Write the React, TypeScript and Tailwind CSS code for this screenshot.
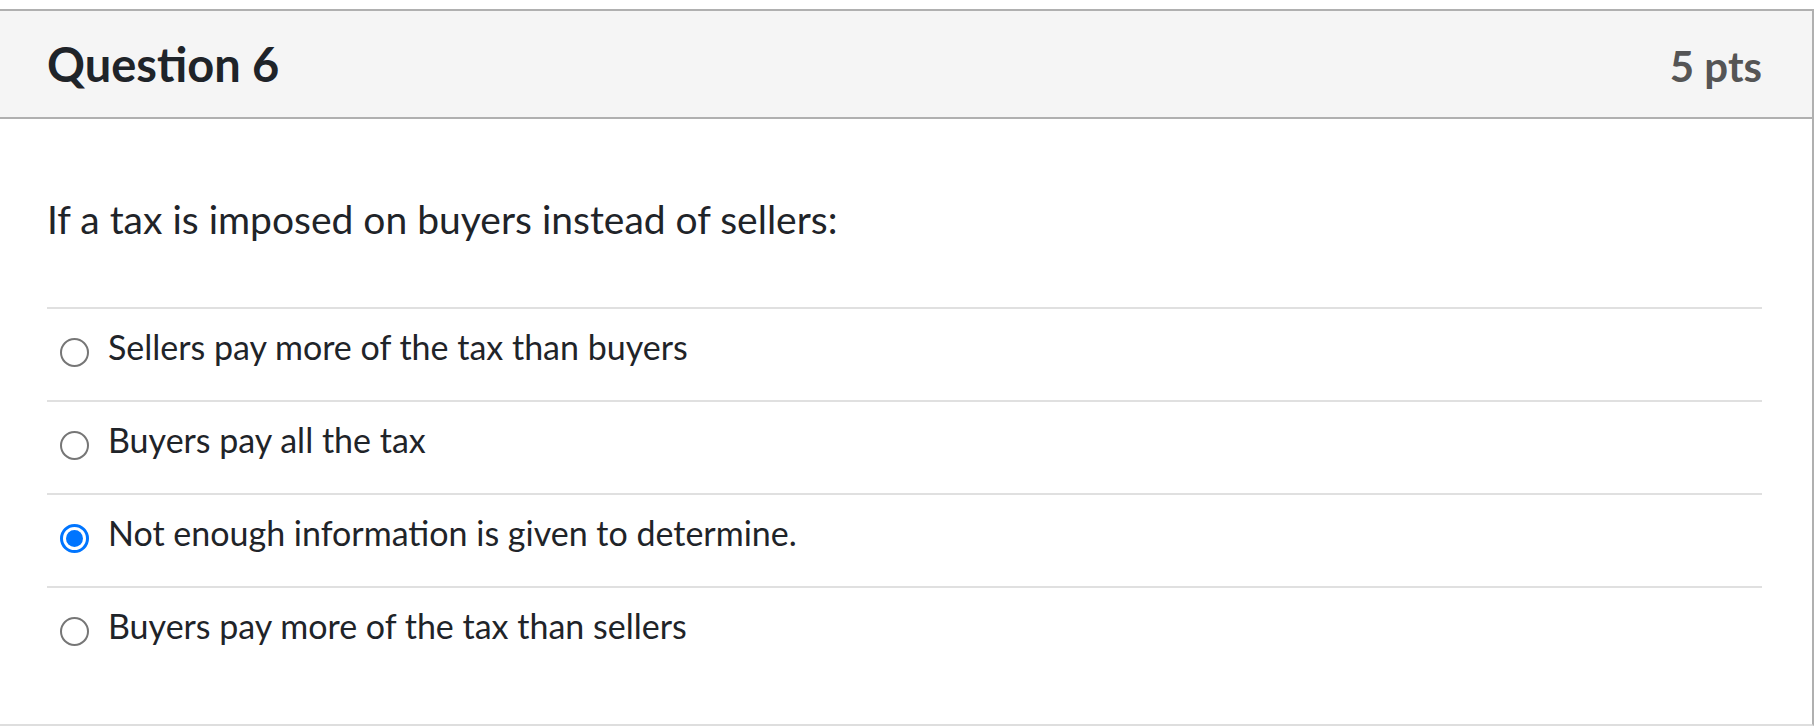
import React from "react";

const options = [
  { label: "Sellers pay more of the tax than buyers", checked: false },
  { label: "Buyers pay all the tax", checked: false },
  { label: "Not enough information is given to determine.", checked: true },
  { label: "Buyers pay more of the tax than sellers", checked: false },
];

function Radio({ checked }: { checked: boolean }) {
  if (checked) {
    return (
      <div className="w-[29px] h-[29px] rounded-full border-[3px] border-[#0075ff] bg-white flex items-center justify-center shrink-0">
        <div className="w-[17px] h-[17px] rounded-full bg-[#0075ff]" />
      </div>
    );
  }
  return <div className="w-[29px] h-[29px] rounded-full border-2 border-[#767676] bg-white shrink-0" />;
}

export default function App() {
  return (
    <div className="w-[1816px] h-[726px] bg-white pt-[9px] overflow-hidden" style={{ fontFamily: "Lato, 'Noto Sans', sans-serif" }}>
      <div className="w-[1814px] h-[717px] border-t-2 border-r-2 border-[#b0b0b0] border-b-2 border-b-[#dedede] flex flex-col">
        <div className="h-[108px] shrink-0 bg-[#f5f5f5] border-b-2 border-[#b0b0b0] flex items-center pl-[47px] pr-[50px]">
          <div className="flex-1 flex items-baseline justify-between">
            <h2 className="text-[47px] leading-[56px] font-bold text-[#1f2429]">Question 6</h2>
            <div className="text-[42px] leading-[50px] font-bold text-[#555555]">5 pts</div>
          </div>
        </div>
        <div className="flex-1 pl-[47px] pr-[50px] pt-[77px]">
          <p className="text-[39px] leading-[46px] text-[#1f2429]">If a tax is imposed on buyers instead of sellers:</p>
          <div className="mt-[65px]">
            {options.map((o) => (
              <div key={o.label} className="border-t-2 border-[#e0e0e0] h-[93px] flex items-start pt-[18px]">
                <div className="ml-[13px] mt-[11px]">
                  <Radio checked={o.checked} />
                </div>
                <span className="ml-[19px] text-[34px] leading-[40px] text-[#1f2429]">{o.label}</span>
              </div>
            ))}
          </div>
        </div>
      </div>
    </div>
  );
}
